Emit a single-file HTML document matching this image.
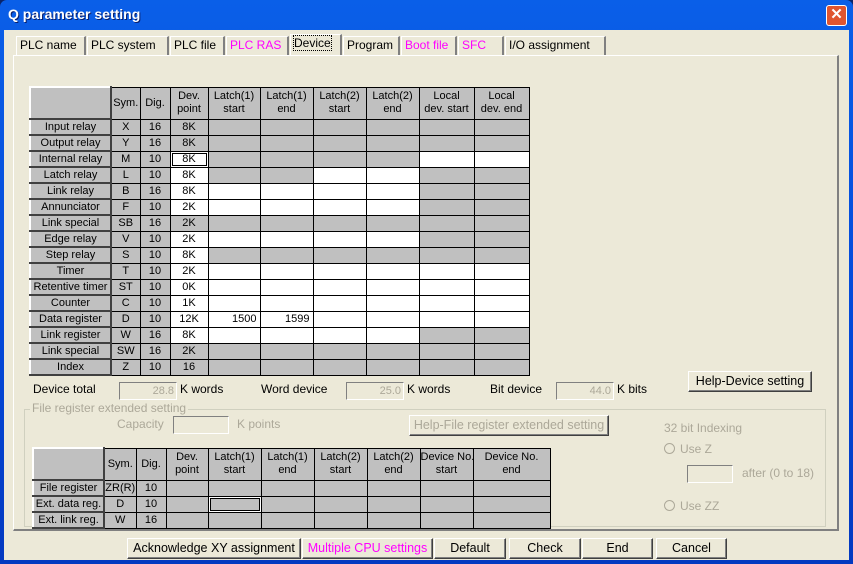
<!DOCTYPE html>
<html><head><meta charset="utf-8"><style>
*{box-sizing:border-box;margin:0;padding:0}
body{width:853px;height:564px;overflow:hidden;background:#0A246A;font-family:"Liberation Sans",sans-serif;font-size:12px;position:relative}
.win{position:absolute;left:0;top:0;width:853px;height:564px;background:linear-gradient(#0A5FE8,#0448D8 60%,#0339C0);border-radius:7px 7px 0 0}
.title{position:absolute;left:8px;top:6px;color:#fff;font-weight:bold;font-size:14px;text-shadow:1px 1px #0a1e6a}
.close{position:absolute;left:826px;top:5px;width:21px;height:21px;background:#E0552F;border:1px solid #fff;border-radius:3px;color:#fff;font-weight:bold;text-align:center;line-height:18px;font-size:15px}
.client{position:absolute;left:4px;top:30px;width:845px;height:530px;background:#ECE9D8}
.a{position:absolute;white-space:nowrap}
.tab{position:absolute;top:36px;height:19px;border-top:1px solid #fff;border-left:1px solid #fff;border-right:2px solid #808080;background:#ECE9D8;padding:1px 3px 0;font-size:12px;color:#000;white-space:nowrap;overflow:hidden}
.m{color:#FF00FF}
.panel{position:absolute;left:13px;top:55px;width:826px;height:476px;border-left:1px solid #fff;border-top:1px solid #fff;border-right:2px solid #808080;border-bottom:2px solid #808080}
table{border-collapse:collapse;table-layout:fixed;position:absolute;font-size:11px}
td{border:1px solid #000;background:#C0C0C0;text-align:center;height:16px;padding:0;line-height:14px;overflow:hidden;white-space:nowrap}
td.w{background:#fff}
td.l{border-top:2px solid #fff;border-left:2px solid #fff;border-right:2px solid #404040;border-bottom:2px solid #404040;line-height:12px}
td.r{text-align:right;padding-right:3px}
td.f{box-shadow:inset 0 0 0 1px #fff,inset 0 0 0 2px #000}
tr.h td{height:32px;line-height:13px}
.btn{position:absolute;height:21px;background:#ECE9D8;border-top:1px solid #fff;border-left:1px solid #fff;border-right:1px solid #404040;border-bottom:1px solid #404040;box-shadow:inset -1px -1px #808080;text-align:center;line-height:19px;font-size:12.5px;white-space:nowrap}
.dis{color:#ACA899}
.ed{position:absolute;height:18px;border-top:1px solid #808080;border-left:1px solid #808080;border-bottom:1px solid #fff;border-right:1px solid #fff;text-align:right;padding-right:2px;color:#ACA899;font-size:11px;line-height:16px}
.rad{display:inline-block;width:11px;height:11px;border:1px solid #ACA899;border-radius:50%;vertical-align:-1px;margin-right:5px}
</style></head><body>
<div class="win">
<div class="title">Q parameter setting</div>
<div class="close">✕</div>
<div class="client"></div>
</div>
<div class="tab" style="left:16px;width:70px">PLC name</div>
<div class="tab" style="left:87px;width:82px">PLC system</div>
<div class="tab" style="left:170px;width:55px">PLC file</div>
<div class="tab m" style="left:226px;width:63px">PLC RAS</div>
<div class="tab" style="left:290px;top:34px;height:22px;width:52px;border-bottom:none"><span style="outline:1px dotted #000">Device</span></div>
<div class="tab" style="left:343px;width:57px">Program</div>
<div class="tab m" style="left:401px;width:56px">Boot file</div>
<div class="tab m" style="left:458px;width:46px">SFC</div>
<div class="tab" style="left:505px;width:101px">I/O assignment</div>
<div class="panel"></div>

<table style="left:29px;top:86px;width:499px">
<colgroup><col style="width:81px"><col style="width:29px"><col style="width:30px"><col style="width:38px"><col style="width:52px"><col style="width:53px"><col style="width:53px"><col style="width:53px"><col style="width:55px"><col style="width:55px"></colgroup>
<tr class="h"><td class="l"></td><td>Sym.</td><td>Dig.</td><td>Dev.<br>point</td><td>Latch(1)<br>start</td><td>Latch(1)<br>end</td><td>Latch(2)<br>start</td><td>Latch(2)<br>end</td><td>Local<br>dev. start</td><td>Local<br>dev. end</td></tr>
<tr><td class="l">Input relay</td><td>X</td><td>16</td><td>8K</td><td></td><td></td><td></td><td></td><td></td><td></td></tr>
<tr><td class="l">Output relay</td><td>Y</td><td>16</td><td>8K</td><td></td><td></td><td></td><td></td><td></td><td></td></tr>
<tr><td class="l">Internal relay</td><td>M</td><td>10</td><td class="w f">8K</td><td></td><td></td><td></td><td></td><td class="w"></td><td class="w"></td></tr>
<tr><td class="l">Latch relay</td><td>L</td><td>10</td><td class="w">8K</td><td></td><td></td><td class="w"></td><td class="w"></td><td></td><td></td></tr>
<tr><td class="l">Link relay</td><td>B</td><td>16</td><td class="w">8K</td><td class="w"></td><td class="w"></td><td class="w"></td><td class="w"></td><td></td><td></td></tr>
<tr><td class="l">Annunciator</td><td>F</td><td>10</td><td class="w">2K</td><td class="w"></td><td class="w"></td><td class="w"></td><td class="w"></td><td></td><td></td></tr>
<tr><td class="l">Link special</td><td>SB</td><td>16</td><td>2K</td><td></td><td></td><td></td><td></td><td></td><td></td></tr>
<tr><td class="l">Edge relay</td><td>V</td><td>10</td><td class="w">2K</td><td class="w"></td><td class="w"></td><td class="w"></td><td class="w"></td><td></td><td></td></tr>
<tr><td class="l">Step relay</td><td>S</td><td>10</td><td class="w">8K</td><td></td><td></td><td></td><td></td><td></td><td></td></tr>
<tr><td class="l">Timer</td><td>T</td><td>10</td><td class="w">2K</td><td class="w"></td><td class="w"></td><td class="w"></td><td class="w"></td><td class="w"></td><td class="w"></td></tr>
<tr><td class="l">Retentive timer</td><td>ST</td><td>10</td><td class="w">0K</td><td class="w"></td><td class="w"></td><td class="w"></td><td class="w"></td><td class="w"></td><td class="w"></td></tr>
<tr><td class="l">Counter</td><td>C</td><td>10</td><td class="w">1K</td><td class="w"></td><td class="w"></td><td class="w"></td><td class="w"></td><td class="w"></td><td class="w"></td></tr>
<tr><td class="l">Data register</td><td>D</td><td>10</td><td class="w">12K</td><td class="w r">1500</td><td class="w r">1599</td><td class="w"></td><td class="w"></td><td class="w"></td><td class="w"></td></tr>
<tr><td class="l">Link register</td><td>W</td><td>16</td><td class="w">8K</td><td class="w"></td><td class="w"></td><td class="w"></td><td class="w"></td><td></td><td></td></tr>
<tr><td class="l">Link special</td><td>SW</td><td>16</td><td>2K</td><td></td><td></td><td></td><td></td><td></td><td></td></tr>
<tr><td class="l">Index</td><td>Z</td><td>10</td><td>16</td><td></td><td></td><td></td><td></td><td></td><td></td></tr>
</table>

<div class="a" style="left:33px;top:382px">Device total</div>
<div class="ed" style="left:119px;top:382px;width:58px">28.8</div>
<div class="a" style="left:180px;top:382px">K words</div>
<div class="a" style="left:261px;top:382px">Word device</div>
<div class="ed" style="left:346px;top:382px;width:58px">25.0</div>
<div class="a" style="left:407px;top:382px">K words</div>
<div class="a" style="left:490px;top:382px">Bit device</div>
<div class="ed" style="left:556px;top:382px;width:58px">44.0</div>
<div class="a" style="left:617px;top:382px">K bits</div>
<div class="btn" style="left:688px;top:371px;width:124px">Help-Device setting</div>

<div style="position:absolute;left:24px;top:409px;width:802px;height:118px;border:1px solid #D0D0BF"></div>
<div class="a dis" style="left:30px;top:401px;background:#ECE9D8;padding:0 2px">File register extended setting</div>
<div class="a dis" style="left:117px;top:417px">Capacity</div>
<div class="ed" style="left:173px;top:416px;width:56px"></div>
<div class="a dis" style="left:237px;top:417px">K points</div>
<div class="btn dis" style="left:409px;top:415px;width:200px">Help-File register extended setting</div>
<div class="a dis" style="left:664px;top:421px">32 bit Indexing</div>
<div class="a dis" style="left:664px;top:442px"><span class="rad"></span>Use Z</div>
<div class="ed" style="left:687px;top:465px;width:46px"></div>
<div class="a dis" style="left:742px;top:466px">after (0 to 18)</div>
<div class="a dis" style="left:664px;top:499px"><span class="rad"></span>Use ZZ</div>

<table style="left:32px;top:447px;width:517px">
<colgroup><col style="width:71px"><col style="width:32px"><col style="width:30px"><col style="width:42px"><col style="width:53px"><col style="width:53px"><col style="width:53px"><col style="width:53px"><col style="width:53px"><col style="width:77px"></colgroup>
<tr class="h"><td class="l"></td><td>Sym.</td><td>Dig.</td><td>Dev.<br>point</td><td>Latch(1)<br>start</td><td>Latch(1)<br>end</td><td>Latch(2)<br>start</td><td>Latch(2)<br>end</td><td>Device No.<br>start</td><td>Device No.<br>end</td></tr>
<tr><td class="l">File register</td><td>ZR(R)</td><td>10</td><td></td><td></td><td></td><td></td><td></td><td></td><td></td></tr>
<tr><td class="l">Ext. data reg.</td><td>D</td><td>10</td><td></td><td class="f"></td><td></td><td></td><td></td><td></td><td></td></tr>
<tr><td class="l">Ext. link reg.</td><td>W</td><td>16</td><td></td><td></td><td></td><td></td><td></td><td></td><td></td></tr>
</table>

<div class="btn" style="left:127px;top:538px;width:174px">Acknowledge XY assignment</div>
<div class="btn m" style="left:302px;top:538px;width:131px">Multiple CPU settings</div>
<div class="btn" style="left:434px;top:538px;width:72px">Default</div>
<div class="btn" style="left:509px;top:538px;width:72px">Check</div>
<div class="btn" style="left:582px;top:538px;width:71px">End</div>
<div class="btn" style="left:656px;top:538px;width:71px">Cancel</div>
</body></html>
